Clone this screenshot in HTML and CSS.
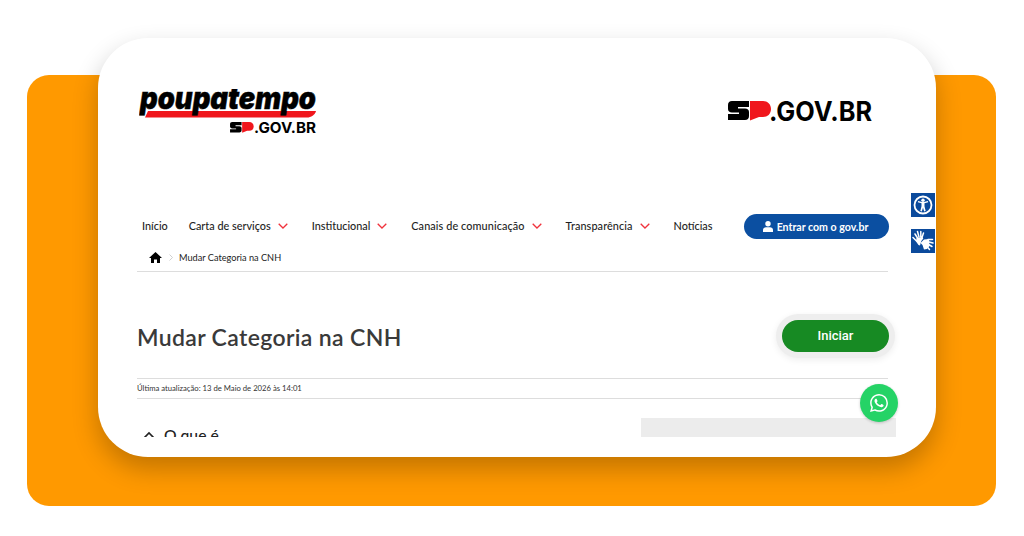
FILE: index.html
```html
<!DOCTYPE html>
<html lang="pt-BR">
<head>
<meta charset="utf-8">
<title>Mudar Categoria na CNH</title>
<link rel="stylesheet" href="styles.css">
</head>
<body>
<div class="panel">
  <div class="card">
    <div class="view">
      <header class="logos">
        <div class="logo-pt">
          <svg width="180" height="46" viewBox="0 0 180 46">
            <path class="red" d="M9 22H177C176 26 172 28.500 168 28.500H6Z"/>
            <text class="pt-word" x="1" y="20" textLength="176" lengthAdjust="spacingAndGlyphs">poupatempo</text>
            <g transform="translate(90.500 32.500) scale(.55)">
              <path d="M5 1H22V7H11V8.500H18C20.500 8.500 22 10 22 12V16C22 18.500 20.500 20 18 20H1V14H12V12.500H5C2.500 12.500 1 11 1 9V5C1 2.500 2.500 1 5 1Z"/>
              <path class="red" d="M23 1h13c4.500 0 8 3 8 8s-3.500 8-8 8h-4l-9 3.500Z"/>
            </g>
            <text class="pt-gov" x="115" y="43.500" textLength="62" lengthAdjust="spacingAndGlyphs">.GOV.BR</text>
          </svg>
        </div>
        <div class="logo-sp">
          <svg width="146" height="22" viewBox="0 0 146 22">
            <path d="M5 1H22V7H11V8.500H18C20.500 8.500 22 10 22 12V16C22 18.500 20.500 20 18 20H1V14H12V12.500H5C2.500 12.500 1 11 1 9V5C1 2.500 2.500 1 5 1Z"/>
            <path class="red" d="M23 1h13c4.500 0 8 3 8 8s-3.500 8-8 8h-4l-9 3.500Z"/>
            <text class="sp-gov" x="42" y="20.500" textLength="103" lengthAdjust="spacingAndGlyphs">.GOV.BR</text>
          </svg>
        </div>
      </header>

      <nav class="nav">
        <a class="nav-link nav-first">Início</a>
        <a class="nav-link">Carta de serviços<svg class="chev" viewBox="0 0 10 6"><path d="M.7.7 5 5 9.300.7"/></svg></a>
        <a class="nav-link">Institucional<svg class="chev" viewBox="0 0 10 6"><path d="M.7.7 5 5 9.300.7"/></svg></a>
        <a class="nav-link nav-wide">Canais de comunicação<svg class="chev" viewBox="0 0 10 6"><path d="M.7.7 5 5 9.300.7"/></svg></a>
        <a class="nav-link nav-wide">Transparência<svg class="chev" viewBox="0 0 10 6"><path d="M.7.7 5 5 9.300.7"/></svg></a>
        <a class="nav-link">Notícias</a>
        <a class="login">
          <svg width="10" height="11" viewBox="0 0 10 11"><circle cx="5" cy="2.800" r="2.700"/><path d="M0 11V8.800C0 7.300 1.500 6.300 3 6.300h4c1.500 0 3 1 3 2.500V11Z"/></svg>
          Entrar com o gov.br
        </a>
      </nav>

      <div class="crumbs">
        <svg class="home" width="13" height="11" viewBox="0 0 13 11"><path d="M6.500 0 13 6h-2v5H8V7.500H5V11H2V6H0Z"/></svg>
        <svg class="sep" width="4" height="7" viewBox="0 0 4 7"><path d="M.5.500 3.500 3.500.5 6.500"/></svg>
        <span>Mudar Categoria na CNH</span>
      </div>

      <div class="title-row">
        <h1 class="title">Mudar Categoria na CNH</h1>
        <a class="start">Iniciar</a>
      </div>

      <p class="updated">Última atualização: 13 de Maio de 2026 às 14:01</p>

      <div class="section">
        <div class="section-head">
          <svg class="up" width="12" height="8" viewBox="0 0 12 8"><path d="M1 7 6 2l5 5"/></svg>
          <span>O que é</span>
        </div>
        <div class="placeholder"></div>
      </div>
    </div>

    <div class="a11y">
      <a class="a11y-btn">
        <svg width="20" height="20" viewBox="0 0 20 20">
          <circle class="ring" cx="10" cy="10" r="8.500"/>
          <circle class="fill" cx="10" cy="5.300" r="1.700"/>
          <path class="fill" d="M4.800 7.200l3.700 1v3.100L7.300 16l1.500.4 1.200-3.700 1.200 3.700 1.500-.4-1.200-4.700V8.200l3.700-1-.3-1.200-4 1H9.100l-4-1Z"/>
        </svg>
      </a>
      <a class="a11y-btn">
        <svg width="22" height="22" viewBox="0 0 22 22">
          <path class="hand" d="M3 4 5.500 8M5.500 1.500 7 7M8.800 1.500V7M11.500 3 10 7.500M1 7.500 4.500 11"/>
          <path class="fill" d="M4.500 8 10.500 7l.8 1.500-2 2.500-1.300 4.500-1.500-.5L4 11.500Z"/>
          <path class="hand" d="M16 9.500 20.500 9.500M17 12 21 13M16.500 14.500 20 16.500M15 16.500 17.500 19.500"/>
          <path class="fill" d="M9 12.500 12 9.500l5-.5.5 7-2.500 3-3 .5-1.500-4.500-1.500-1.500Z"/>
        </svg>
      </a>
    </div>

    <a class="whats">
      <svg width="18" height="18" viewBox="0 0 24 24"><path d="M17.472 14.382c-.297-.149-1.758-.867-2.030-.967-.273-.099-.471-.148-.670.150-.197.297-.767.966-.940 1.164-.173.199-.347.223-.644.075-.297-.150-1.255-.463-2.390-1.475-.883-.788-1.480-1.761-1.653-2.059-.173-.297-.018-.458.130-.606.134-.133.298-.347.446-.520.149-.174.198-.298.298-.497.099-.198.050-.371-.025-.520-.075-.149-.669-1.612-.916-2.207-.242-.579-.487-.500-.669-.510-.173-.008-.371-.010-.570-.010-.198 0-.520.074-.792.372-.272.297-1.040 1.016-1.040 2.479 0 1.462 1.065 2.875 1.213 3.074.149.198 2.096 3.200 5.077 4.487.709.306 1.262.489 1.694.625.712.227 1.360.195 1.871.118.571-.085 1.758-.719 2.006-1.413.248-.694.248-1.289.173-1.413-.074-.124-.272-.198-.570-.347m-5.421 7.403h-.004a9.870 9.870 0 0 1-5.031-1.378l-.361-.214-3.741.982.998-3.648-.235-.374a9.860 9.860 0 0 1-1.510-5.260c.001-5.450 4.436-9.884 9.888-9.884 2.640 0 5.122 1.030 6.988 2.898a9.825 9.825 0 0 1 2.893 6.994c-.003 5.450-4.437 9.884-9.885 9.884m8.413-18.297A11.815 11.815 0 0 0 12.050 0C5.495 0 .160 5.335.157 11.892c0 2.096.547 4.142 1.588 5.945L.057 24l6.305-1.654a11.882 11.882 0 0 0 5.683 1.448h.005c6.554 0 11.890-5.335 11.893-11.893a11.821 11.821 0 0 0-3.480-8.413z"/></svg>
    </a>
  </div>
</div>
</body>
</html>
```

FILE: styles.css
```css
* { box-sizing: border-box; }
html, body { margin: 0; padding: 0; }
body {
  width: 1024px;
  height: 536px;
  overflow: hidden;
  background: #fff;
  font-family: "Lato", "Liberation Sans", sans-serif;
  color: #222;
  padding: 75px 28px 30px 27px;
}
.panel {
  height: 431px;
  background: #ff9900;
  border-radius: 22px;
  padding-left: 71px;
}
.card {
  position: relative;
  top: -37px;
  width: 838px;
  height: 419px;
  background: #fff;
  border-radius: 50px;
  box-shadow: 0 12px 26px rgba(0, 0, 0, .24);
}
.view {
  height: 399px;
  overflow: hidden;
  padding: 0 48px 0 39px;
}
.red { fill: #f0161c; }
.logos {
  display: flex;
  justify-content: space-between;
  align-items: flex-start;
  height: 176px;
  padding: 51px 15px 0 2px;
}
.logo-pt svg { display: block; }
.logo-sp svg { display: block; margin-top: 11px; }
.pt-word {
  font: italic 900 31px "Inter", "Roboto", sans-serif;
  fill: #000;
  stroke: #000;
  stroke-width: .5;
}
.pt-gov { font: 700 15px "Inter", "Roboto", sans-serif; fill: #000; }
.sp-gov { font: 700 27px "Inter", "Roboto", sans-serif; fill: #000; }

.nav {
  display: flex;
  align-items: center;
  height: 25px;
  padding-left: 5px;
  gap: 24px;
  margin-right: -1px;
}
.nav-link {
  display: flex;
  align-items: center;
  font-size: 10.850px;
  font-weight: 500;
  color: #1e1e1e;
  margin-top: -2px;
}
.nav-first { margin-right: -3px; }
.nav-wide { letter-spacing: .1px; }
.chev {
  width: 10px;
  height: 6px;
  margin-left: 7px;
  margin-top: 1px;
  fill: none;
  stroke: #f0323c;
  stroke-width: 1.300;
}
.login {
  margin-left: auto;
  width: 145px;
  height: 25px;
  padding-right: 2px;
  display: flex;
  align-items: center;
  justify-content: center;
  gap: 4px;
  background: #0b4fa1;
  border-radius: 13px;
  color: #fff;
  font-size: 10.600px;
  font-weight: 700;
}
.login svg { fill: #fff; }

.crumbs {
  display: flex;
  align-items: center;
  height: 33px;
  padding: 5px 0 0 12px;
  font-size: 9.200px;
  color: #222;
  border-bottom: 1px solid #ddd;
}
.home { fill: #000; }
.sep {
  margin: 0 6px 0 7px;
  fill: none;
  stroke: #c4c4c4;
  stroke-width: .8;
}

.title-row {
  display: flex;
  justify-content: space-between;
  align-items: center;
  height: 107px;
  border-bottom: 1px solid #ddd;
  padding-top: 24px;
}
.title {
  margin: 0;
  font-size: 23px;
  font-weight: 600;
  letter-spacing: .35px;
  color: #3a3a3a;
}
.start {
  width: 107px;
  height: 32px;
  margin: 0 -1px 3px 0;
  display: flex;
  align-items: center;
  justify-content: center;
  background: #178a23;
  border-radius: 16px;
  color: #fff;
  font: 500 13px "Roboto", sans-serif;
  box-shadow: 0 0 0 6px #eee, 0 2px 7px 6px rgba(0, 0, 0, .07);
}
.updated {
  margin: 0;
  height: 20px;
  line-height: 19px;
  font-size: 7.700px;
  color: #333;
  border-bottom: 1px solid #ddd;
}
.section {
  display: flex;
  justify-content: space-between;
  margin-right: -8px;
  padding-top: 19px;
}
.section-head {
  display: flex;
  align-items: center;
  gap: 9px;
  padding: 3px 0 0 6px;
  height: 30px;
  font-size: 15.700px;
  font-weight: 500;
  color: #222;
}
.up { fill: none; stroke: #222; stroke-width: 1.600; }
.placeholder {
  width: 255px;
  height: 40px;
  background: #ececec;
}

.a11y {
  position: absolute;
  top: 155px;
  right: 1px;
  display: flex;
  flex-direction: column;
  gap: 12px;
}
.a11y-btn {
  width: 24px;
  height: 24px;
  display: flex;
  align-items: center;
  justify-content: center;
  background: #0b4a9c;
}
.ring { fill: none; stroke: #fff; stroke-width: 1.800; }
.fill { fill: #fff; }
.hand { fill: none; stroke: #fff; stroke-width: 1.500; stroke-linecap: round; }

.whats {
  position: absolute;
  left: 762px;
  top: 346px;
  width: 38px;
  height: 38px;
  display: flex;
  align-items: center;
  justify-content: center;
  background: #25d366;
  border-radius: 50%;
  box-shadow: 0 1px 3px rgba(0, 0, 0, .2);
}
.whats svg { fill: #fff; }
```
